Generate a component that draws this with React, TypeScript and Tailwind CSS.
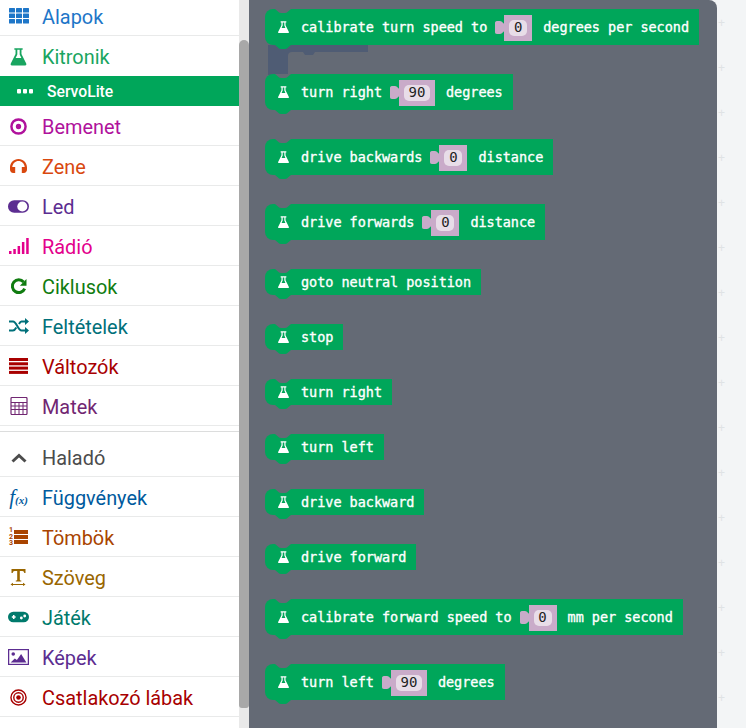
const Flask = ({ className }: { className?: string }) => (
  <svg viewBox="0 0 16 16" className={className} fill="currentColor">
    <path d="M4.500 1h7v1.400h-1v3.400l4 8c.4.8 0 1.700-.9 1.700H2.400c-.9 0-1.300-.9-.9-1.700l4-8V2.400h-1zM7 2.400v3.900l-1.400 2.900h4.800L9 6.300V2.400z" fillRule="evenodd" />
  </svg>
);

const Dots = () => (
  <svg viewBox="0 0 16 5" className="w-4 h-[5px]" fill="white">
    <rect x="0" y="0" width="4" height="4.500" rx="1" />
    <rect x="6" y="0" width="4" height="4.500" rx="1" />
    <rect x="12" y="0" width="4" height="4.500" rx="1" />
  </svg>
);

const icons: Record<string, React.ReactNode> = {
  grid: (
    <svg viewBox="0 0 20 16" className="w-5 h-4" fill="currentColor">
      {[0, 5.500, 11].map((y) =>
        [0, 7, 14].map((x) => <rect key={`${x}-${y}`} x={x} y={y} width="6" height="4.500" rx="0.500" />)
      )}
    </svg>
  ),
  flask: <Flask className="w-[19px] h-[19px]" />,
  target: (
    <svg viewBox="0 0 18 18" className="w-[17px] h-[17px]" fill="none" stroke="currentColor">
      <circle cx="9" cy="9" r="7.500" strokeWidth="2.600" />
      <circle cx="9" cy="9" r="2.800" fill="currentColor" stroke="none" />
    </svg>
  ),
  headphones: (
    <svg viewBox="0 0 20 18" className="w-[19px] h-[17px]" fill="currentColor">
      <path d="M10 1C4.800 1 1 5 1 10v2c0 2 1 4 3.500 4H6.500V9.500H3.400C3.800 6 6.500 3.200 10 3.200s6.200 2.800 6.600 6.300h-3.100V16H15.500c2.500 0 3.500-2 3.500-4v-2c0-5-3.800-9-9-9z" />
    </svg>
  ),
  toggle: (
    <svg viewBox="0 0 22 13" className="w-[22px] h-[13px]">
      <rect x="0" y="0" width="22" height="13" rx="6.500" fill="currentColor" />
      <circle cx="15" cy="6.500" r="5.300" fill="white" />
    </svg>
  ),
  signal: (
    <svg viewBox="0 0 20 16" className="w-5 h-4" fill="currentColor">
      <rect x="0" y="13" width="2.500" height="3" />
      <rect x="4.300" y="11" width="2.500" height="5" />
      <rect x="8.600" y="8" width="2.500" height="8" />
      <rect x="12.900" y="4" width="2.500" height="12" />
      <rect x="17.200" y="0" width="2.500" height="16" />
    </svg>
  ),
  loop: (
    <svg viewBox="0 0 16 16" className="w-[17px] h-[17px]" fill="none" stroke="currentColor">
      <path d="M12.800 3.800A6 6 0 1 0 13.800 10" strokeWidth="2.800" />
      <path d="M15.500 1v6.200H9.300z" fill="currentColor" stroke="none" />
    </svg>
  ),
  shuffle: (
    <svg viewBox="0 0 20 16" className="w-5 h-4" fill="none" stroke="currentColor" strokeWidth="2">
      <path d="M0 3.500h4c3.500 0 5 9 8.500 9H17M0 12.500h4c1.500 0 2.500-1.500 3.300-3M10 6c.7-1.300 1.500-2.500 2.500-2.500H17" />
      <path d="M16 0l4 3.500-4 3.500zM16 9l4 3.500-4 3.500z" fill="currentColor" stroke="none" />
    </svg>
  ),
  bars: (
    <svg viewBox="0 0 20 16" className="w-5 h-4" fill="currentColor">
      <rect y="0" width="19" height="3" />
      <rect y="4.300" width="19" height="3" />
      <rect y="8.600" width="19" height="3" />
      <rect y="12.900" width="19" height="3" />
    </svg>
  ),
  calc: (
    <svg viewBox="0 0 18 18" className="w-[18px] h-[18px]" fill="none" stroke="currentColor" strokeWidth="1">
      <rect x="1" y="0.500" width="16" height="17" rx="1" strokeWidth="1.200" />
      <path d="M1 5.500h16M1 9h16M1 12.500h16M5 5.500v12M9 5.500v12M13 5.500v12" />
    </svg>
  ),
  chevron: (
    <svg viewBox="0 0 16 10" className="w-4 h-[10px]" fill="none" stroke="currentColor" strokeWidth="3">
      <path d="M1.500 8.500L8 2.500l6.500 6" />
    </svg>
  ),
  func: (
    <span className="font-['Liberation_Serif',serif] italic text-[21px] leading-none whitespace-nowrap">
      f<span className="text-[11px] font-bold">(x)</span>
    </span>
  ),
  list: (
    <div className="flex items-center gap-[1px]">
      <div className="flex flex-col text-[7px] font-bold leading-[6.500px] font-['Roboto',sans-serif]">
        <span>1</span>
        <span>2</span>
        <span>3</span>
      </div>
      <div className="flex flex-col gap-[1px]">
        <div className="w-[14px] h-[4px] bg-current" />
        <div className="w-[14px] h-[4px] bg-current" />
        <div className="w-[14px] h-[4px] bg-current" />
      </div>
    </div>
  ),
  text: (
    <svg viewBox="0 0 18 18" className="w-[18px] h-[18px]" fill="currentColor">
      <path d="M1.500 1h14v4h-1.200c-.3-1.300-.7-2-2-2H9.800v8.500c0 .7.3 1 1.500 1v1H5.800v-1c1.200 0 1.400-.3 1.400-1V3H4.700c-1.300 0-1.700.7-2 2H1.500z" />
      <path d="M0.500 16.500l2.500-1.800v1.200h10v-1.200l2.500 1.800-2.500 1.500v-1h-10v1z" />
    </svg>
  ),
  gamepad: (
    <svg viewBox="0 0 22 12" className="w-[21px] h-3">
      <rect width="22" height="11" y="0.500" rx="5.500" fill="currentColor" />
      <path d="M4 6h4M6 4v4" stroke="white" strokeWidth="1.600" />
      <circle cx="14" cy="7" r="1.500" fill="white" />
      <circle cx="17.500" cy="5" r="1.500" fill="white" />
    </svg>
  ),
  image: (
    <svg viewBox="0 0 20 16" preserveAspectRatio="none" className="w-[21px] h-4">
      <rect x="0.600" y="0.600" width="18.800" height="14.800" fill="none" stroke="currentColor" strokeWidth="1.200" />
      <circle cx="5" cy="5" r="1.700" fill="currentColor" />
      <path d="M2.500 13.500l4-4 2 1.500 4-6 5 8.500z" fill="currentColor" />
    </svg>
  ),
  pins: (
    <svg viewBox="0 0 18 18" className="w-[17px] h-[17px]" fill="none" stroke="currentColor">
      <circle cx="9" cy="9" r="8" strokeWidth="1.500" />
      <circle cx="9" cy="9" r="5" strokeWidth="1.500" />
      <circle cx="9" cy="9" r="2.400" fill="currentColor" stroke="none" />
    </svg>
  ),
};

type Item = { name: string; icon: string; color: string; noBorder?: boolean };

const topItems: Item[] = [
  { name: 'Alapok', icon: 'grid', color: 'text-[#1e76c8]' },
  { name: 'Kitronik', icon: 'flask', color: 'text-[#19a560]', noBorder: true },
];
const midItems: Item[] = [
  { name: 'Bemenet', icon: 'target', color: 'text-[#b0129c]' },
  { name: 'Zene', icon: 'headphones', color: 'text-[#d9480f]' },
  { name: 'Led', icon: 'toggle', color: 'text-[#5c2d91]' },
  { name: 'Rádió', icon: 'signal', color: 'text-[#e3008c]' },
  { name: 'Ciklusok', icon: 'loop', color: 'text-[#107c10]' },
  { name: 'Feltételek', icon: 'shuffle', color: 'text-[#00707a]' },
  { name: 'Változók', icon: 'bars', color: 'text-[#a80000]' },
  { name: 'Matek', icon: 'calc', color: 'text-[#712672]' },
];
const advItems: Item[] = [
  { name: 'Függvények', icon: 'func', color: 'text-[#005a9e]' },
  { name: 'Tömbök', icon: 'list', color: 'text-[#a94400]' },
  { name: 'Szöveg', icon: 'text', color: 'text-[#996600]' },
  { name: 'Játék', icon: 'gamepad', color: 'text-[#007a6c]' },
  { name: 'Képek', icon: 'image', color: 'text-[#5c2d91]' },
  { name: 'Csatlakozó lábak', icon: 'pins', color: 'text-[#a80000]' },
];

const Row = ({ item }: { item: Item }) => (
  <div className={`flex items-center h-10 shrink-0 pt-[1px] border-b ${item.noBorder ? 'border-transparent' : 'border-[#e9eaea]'} ${item.color}`}>
    <div className="w-[42px] pl-2 pr-[13px] shrink-0 flex justify-center items-center">{icons[item.icon]}</div>
    <span className="text-[19.900px] leading-none pt-[4px]">{item.name}</span>
  </div>
);

// a block's top notch and bottom tab are drawn, the body stays a div
const Block = ({ children, tall }: { children: React.ReactNode; tall?: boolean }) => (
  <div className={`relative self-start flex items-center bg-[#00a65a] rounded-l-[8px] pl-[36px] pr-[10px] text-white ${tall ? 'h-[36px] pt-[1px]' : 'h-[26px]'}`}>
    <svg viewBox="0 0 20 4" className="absolute left-[8px] top-0 w-5 h-1">
      <path d="M2 0l3 2.500c1 1 2 1.500 5 1.500S14 3.500 15 2.500L18 0z" fill="#646a75" />
    </svg>
    <svg viewBox="0 0 20 4" className="absolute left-[8px] top-full w-5 h-1">
      <path d="M2 0l3 2.500c1 1 2 1.500 5 1.500S14 3.500 15 2.500L18 0z" fill="#00a65a" />
    </svg>
    <Flask className="absolute left-[12px] top-1/2 -translate-y-1/2 w-[13px] h-[13px]" />
    <span className="whitespace-nowrap flex items-center">{children}</span>
  </div>
);

const Field = ({ value }: { value: string }) => {
  const wide = value.length > 1;
  return (
    <span className="relative flex items-center ml-[17px] mr-[11px] text-[14px] tracking-normal [-webkit-text-stroke:0px]">
      <span className={`h-[26px] bg-[#c9abc9] flex items-center justify-center ${wide ? 'w-[36px]' : 'w-[28px]'}`}>
        <span className={`bg-[#e8dde8] rounded-[5px] h-[16px] flex items-center justify-center text-[#222] ${wide ? 'w-[26px]' : 'w-[18px]'}`}>
          {value}
        </span>
      </span>
      <svg viewBox="0 0 10 13" className="absolute -left-[9px] top-[6px] w-[10px] h-[13px]">
        <path d="M10 3C8 3 7.500 0 5 0H2C.5 0 0 1 0 2v9c0 1 .5 2 2 2h3c2.500 0 3-3 5-3z" fill="#c9abc9" />
      </svg>
    </span>
  );
};

const App = () => {
  return (
    <div className="relative w-[746px] h-[728px] overflow-hidden flex bg-[#f3f5f6] font-['Roboto',sans-serif]">
      {/* 카테고리 목록 */}
      <div className="w-[239px] shrink-0 bg-white flex flex-col -mt-[4px]">
        {topItems.map((item) => (
          <Row key={item.name} item={item} />
        ))}
        <div className="flex items-center h-[30px] shrink-0 bg-[#00a65a] text-white">
          <div className="w-[47px] pl-[17px] shrink-0 flex items-center">
            <Dots />
          </div>
          <span className="text-[15.700px] font-medium leading-none pt-[2px]">ServoLite</span>
        </div>
        {midItems.map((item) => (
          <Row key={item.name} item={item} />
        ))}
        <div className="h-[6px] shrink-0 border-b border-[#dcdddd]" />
        <div className="flex items-center h-[45px] shrink-0 pt-[7px] border-b border-[#e9eaea] text-[#4c4c4c]">
          <div className="w-[42px] pl-2 pr-[13px] shrink-0 flex justify-center items-center">{icons.chevron}</div>
          <span className="text-[19.900px] leading-none pt-[2px]">Haladó</span>
        </div>
        {advItems.map((item) => (
          <Row key={item.name} item={item} />
        ))}
      </div>

      {/* 스크롤바 */}
      <div className="w-[10px] shrink-0 bg-[#e9e9e9] pt-[40px] pb-[20px]">
        <div className="h-full bg-[#a8a8a8] rounded-t-[5px] rounded-b-[3px]" />
      </div>

      {/* 블록 플라이아웃 */}
      <div className="relative w-[468px] shrink-0 bg-[#646a75] rounded-tr-[8px] pl-4 pt-[9px] flex flex-col gap-[29px] text-[13.500px] tracking-[-0.030px] font-['DejaVu_Sans_Mono',monospace] [-webkit-text-stroke:0.35px]">
        <svg viewBox="0 0 100 30" className="absolute left-[19px] top-[45px] w-[100px] h-[30px]">
          <path d="M0 0H100V7H47l-2 3h-8l-2-3H24a4 4 0 0 0-4 4V30H0z" fill="#4f5c74" />
        </svg>
        <Block tall>calibrate turn speed to<Field value="0" />degrees per second</Block>
        <Block tall>turn right<Field value="90" />degrees</Block>
        <Block tall>drive backwards<Field value="0" />distance</Block>
        <Block tall>drive forwards<Field value="0" />distance</Block>
        <Block>goto neutral position</Block>
        <Block>stop</Block>
        <Block>turn right</Block>
        <Block>turn left</Block>
        <Block>drive backward</Block>
        <Block>drive forward</Block>
        <Block tall>calibrate forward speed to<Field value="0" />mm per second</Block>
        <Block tall>turn left<Field value="90" />degrees</Block>
      </div>

      {/* 워크스페이스 격자 */}
      <div className="flex-1 flex flex-col pt-[15px] gap-[29px] pl-[1px] text-[#dfe3e5] text-[12px] font-['Liberation_Sans',sans-serif] leading-[16px]">
        {Array.from({ length: 16 }).map((_, i) => (
          <span key={i}>+</span>
        ))}
      </div>
    </div>
  );
};

export default App;
